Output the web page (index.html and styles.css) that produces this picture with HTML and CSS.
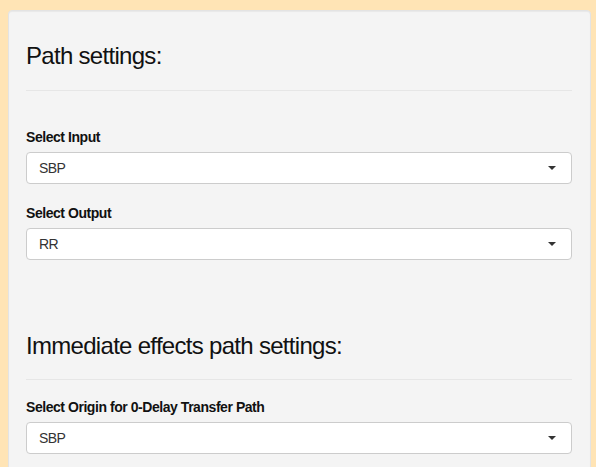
FILE: index.html
```html
<!DOCTYPE html>
<html>
<head>
<meta charset="utf-8">
<link rel="stylesheet" href="styles.css">
</head>
<body>
<div class="well">
  <h3 class="section-title first">Path settings:</h3>
  <hr class="divider">
  <div class="form-group first-group">
    <label class="control-label">Select Input</label>
    <div class="select"><span class="select-value">SBP</span><span class="caret"></span></div>
  </div>
  <div class="form-group">
    <label class="control-label">Select Output</label>
    <div class="select"><span class="select-value">RR</span><span class="caret"></span></div>
  </div>
  <h3 class="section-title second">Immediate effects path settings:</h3>
  <hr class="divider second-divider">
  <div class="form-group after-second">
    <label class="control-label">Select Origin for 0-Delay Transfer Path</label>
    <div class="select"><span class="select-value">SBP</span><span class="caret"></span></div>
  </div>
</div>
</body>
</html>
```
FILE: styles.css
```css
html, body {
  margin: 0;
  padding: 0;
  background: #ffe4b5;
  font-family: "Liberation Sans", Arial, sans-serif;
  color: #333;
}

.well {
  box-sizing: border-box;
  width: 583px;
  margin: 10px 0 0 8px;
  padding: 19px 18px 40px 17px;
  background: #f4f4f4;
  border: 1px solid #e3e3e3;
  border-radius: 4px;
  box-shadow: inset 0 1px 1px rgba(0, 0, 0, 0.05);
}

.section-title {
  margin: 0;
  font-size: 24px;
  font-weight: normal;
  line-height: 26.4px;
  letter-spacing: -0.7px;
  color: #111;
}

.section-title.first {
  margin-top: 13px;
}

.section-title.second {
  margin-top: 73px;
}

.divider {
  margin: 21px 0 0 0;
  border: 0;
  border-top: 1px solid #e6e6e6;
  height: 0;
}

.divider.second-divider {
  margin-top: 19px;
}

.form-group {
  margin-top: 19px;
}

.form-group.first-group {
  margin-top: 36px;
}

.form-group.after-second {
  margin-top: 17px;
}

.control-label {
  display: block;
  font-size: 14px;
  font-weight: bold;
  line-height: 20px;
  letter-spacing: -0.45px;
  margin-bottom: 5px;
  color: #111;
}

.select {
  position: relative;
  box-sizing: border-box;
  height: 32px;
  padding: 5px 12px;
  background: #fff;
  border: 1px solid #ccc;
  border-radius: 4px;
  font-size: 14px;
  line-height: 20px;
  letter-spacing: -0.6px;
  color: #333;
}

.caret {
  position: absolute;
  right: 15px;
  top: 13px;
  width: 0;
  height: 0;
  border-style: solid;
  border-width: 4px 4px 0 4px;
  border-color: #333 transparent transparent transparent;
}
```
